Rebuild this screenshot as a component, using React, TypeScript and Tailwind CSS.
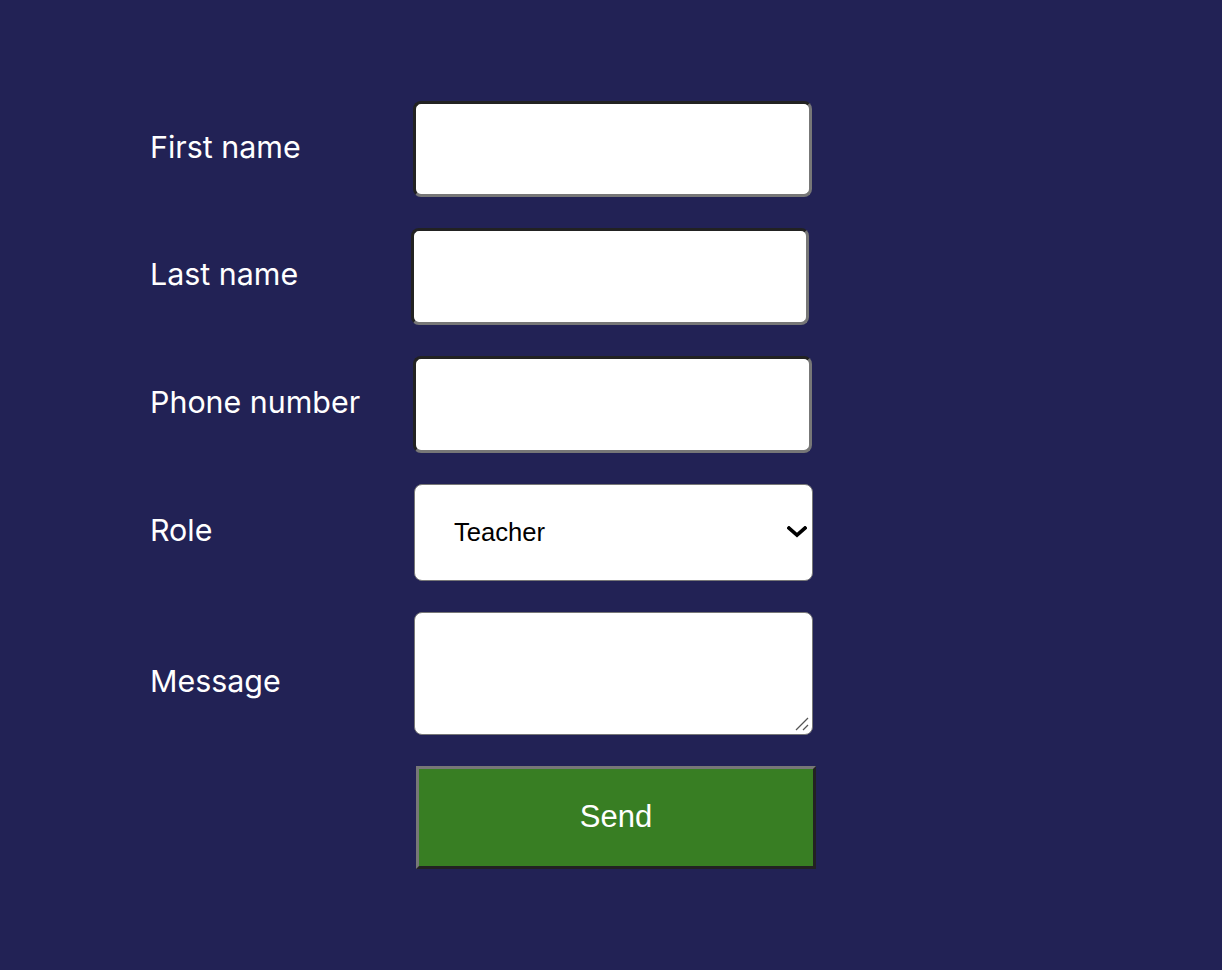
import React from "react";

const inset =
  "block bg-white rounded-[8px] border-[3px] border-solid border-t-[#222222] border-l-[#222222] border-b-[#777777] border-r-[#777777] outline-none";

export default function App() {
  const label = "text-[30.4px] text-white leading-none -mt-[4px]";
  return (
    <div
      className="min-h-[970px] w-full bg-[#222255] pl-[150px] pt-[101px]"
      style={{ fontFamily: "Inter, 'Noto Sans', sans-serif" }}
    >
      <form className="flex flex-col">
        <div className="flex items-center">
          <label className={`${label} w-[263px]`}>First name</label>
          <input type="text" className={`${inset} w-[399px] h-[96px]`} />
        </div>
        <div className="flex items-center mt-[31px]">
          <label className={`${label} w-[261px]`}>Last name</label>
          <input type="text" className={`${inset} w-[398px] h-[97px]`} />
        </div>
        <div className="flex items-center mt-[31px]">
          <label className={`${label} w-[263px]`}>Phone number</label>
          <input type="text" className={`${inset} w-[399px] h-[97px]`} />
        </div>
        <div className="flex items-center mt-[31px]">
          <label className={`${label} w-[264px]`}>Role</label>
          <div className="relative w-[399px] h-[97px]">
            <select
              defaultValue="Teacher"
              className="appearance-none w-full h-full bg-white rounded-[8px] border-[1.5px] border-[#777777] pl-[39px] text-[25.6px] text-black outline-none"
              style={{ fontFamily: "'Liberation Sans', Arial, sans-serif" }}
            >
              <option>Teacher</option>
              <option>Student</option>
              <option>Parent</option>
            </select>
            <svg
              className="pointer-events-none absolute left-[373px] top-[42px]"
              width="20"
              height="12"
              viewBox="0 0 20 12"
            >
              <path d="M2 2 L10 9 L18 2" fill="none" stroke="#000" strokeWidth="3.6" strokeLinecap="square" />
            </svg>
          </div>
        </div>
        <div className="flex items-center mt-[31px]">
          <label className={`${label} w-[264px] pt-[20px]`}>Message</label>
          <div className="relative w-[399px] h-[123px]">
            <textarea className="block w-full h-full bg-white rounded-[8px] border-[1.5px] border-[#777777] outline-none resize-none" />
            <svg
              className="pointer-events-none absolute right-[3px] bottom-[3px]"
              width="16"
              height="16"
              viewBox="0 0 16 16"
            >
              <path d="M2 14 L14 2" stroke="#555" strokeWidth="1.3" />
              <path d="M9 14 L14 9" stroke="#555" strokeWidth="1.3" />
            </svg>
          </div>
        </div>
        <div className="flex mt-[31px]">
          <div className="w-[266px]" />
          <button
            type="button"
            className="w-[400px] h-[103px] bg-[#387e23] text-white text-[31px] border-[3px] border-solid border-t-[#777777] border-l-[#777777] border-b-[#222222] border-r-[#222222]"
            style={{ fontFamily: "'Liberation Sans', Arial, sans-serif" }}
          >
            Send
          </button>
        </div>
      </form>
    </div>
  );
}
